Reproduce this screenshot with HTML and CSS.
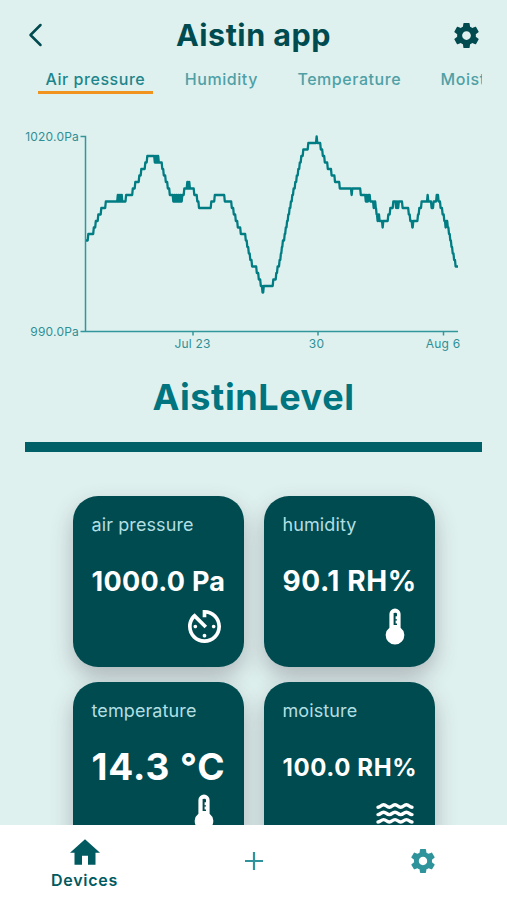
FILE: index.html
```
<!DOCTYPE html>
<html lang="en">
  <head>
    <meta charset="UTF-8" />
    <title>Aistin app</title>
    <link rel="stylesheet" href="styles.css" />
  </head>
  <body>
    <!-- shared icons -->
    <svg class="sprite">
      <symbol id="icon-gear" viewBox="2 2 20 20">
        <path d="M19.43 12.98c.04-.32.07-.64.07-.98s-.03-.66-.07-.98l2.11-1.65c.19-.15.24-.42.12-.64l-2-3.46c-.12-.22-.39-.3-.61-.22l-2.49 1c-.52-.4-1.08-.73-1.69-.98l-.38-2.65C14.46 2.18 14.25 2 14 2h-4c-.25 0-.46.18-.49.42l-.38 2.65c-.61.25-1.17.59-1.69.98l-2.49-1c-.23-.09-.49 0-.61.22l-2 3.46c-.13.22-.07.49.12.64l2.11 1.65c-.04.32-.07.65-.07.98s.03.66.07.98l-2.11 1.65c-.19.15-.24.42-.12.64l2 3.46c.12.22.39.3.61.22l2.49-1c.52.4 1.08.73 1.69.98l.38 2.65c.03.24.24.42.49.42h4c.25 0 .46-.18.49-.42l.38-2.65c.61-.25 1.17-.59 1.69-.98l2.49 1c.23.09.49 0 .61-.22l2-3.46c.12-.22.07-.49-.12-.64l-2.11-1.65zM12 15.5c-1.93 0-3.5-1.57-3.5-3.5s1.57-3.5 3.5-3.5 3.5 1.57 3.5 3.5-1.57 3.5-3.5 3.5z" />
      </symbol>
      <symbol id="icon-thermometer" viewBox="0 0 20 37">
        <path fill-rule="evenodd" d="M10 .5a5.6 5.6 0 0 1 5.6 5.6v13.6a9.3 9.3 0 1 1-11.2 0V6.1A5.6 5.6 0 0 1 10 .5zM8.6 5v12H12v-1.4h-1.4v-3H12v-1.4h-1.4v-3H12V6a1.200 1.200 0 0 0-1.200-1.200z" />
      </symbol>
    </svg>

    <div class="app">
      <header class="header">
        <svg class="back" viewBox="0 0 14 24">
          <path d="M12 2 2 12 12 22" />
        </svg>
        <h1>Aistin app</h1>
        <svg class="settings"><use href="#icon-gear" /></svg>
      </header>

      <nav class="tabs">
        <div class="tab active">Air pressure</div>
        <div class="tab">Humidity</div>
        <div class="tab">Temperature</div>
        <div class="tab">Moisture</div>
      </nav>

      <main class="content">
        <svg class="chart" viewBox="20 120 460 240">
          <path class="axis" d="M80.5 136.500H85.5V331.500H458M80.5 331.500H85.5M193 331.500v4M318 331.500v4M443.5 331.500v4" />
          <path class="line" id="line" />
          <g class="y-labels">
            <text x="79" y="140.5">1020.0Pa</text>
            <text x="79" y="336">990.0Pa</text>
          </g>
          <g class="x-labels">
            <text x="192.5" y="348">Jul 23</text>
            <text x="316.5" y="348">30</text>
            <text x="443" y="348">Aug 6</text>
          </g>
        </svg>

        <h2>AistinLevel</h2>
        <div class="divider"></div>

        <div class="cards">
          <div class="card">
            <div class="label">air pressure</div>
            <div class="value pressure">1000.0 Pa</div>
            <svg class="icon timer" viewBox="3 3 18 18">
              <path d="M11 17c0 .55.45 1 1 1s1-.45 1-1-.45-1-1-1-1 .45-1 1zm0-14v4h2V5.080c3.390.49 6 3.390 6 6.920 0 3.870-3.130 7-7 7s-7-3.130-7-7c0-1.680.59-3.220 1.580-4.420L12 13l1.410-1.410-6.800-6.800v.02C4.420 6.450 3 9.050 3 12c0 4.970 4.020 9 9 9 4.970 0 9-4.030 9-9s-4.030-9-9-9h-1zm7 9c0-.55-.45-1-1-1s-1 .45-1 1 .45 1 1 1 1-.45 1-1zM6 12c0 .55.45 1 1 1s1-.45 1-1-.45-1-1-1-1 .45-1 1z" />
            </svg>
          </div>
          <div class="card">
            <div class="label">humidity</div>
            <div class="value humidity">90.1 RH%</div>
            <svg class="icon thermometer"><use href="#icon-thermometer" /></svg>
          </div>
          <div class="card">
            <div class="label">temperature</div>
            <div class="value temperature">14.3 °C</div>
            <svg class="icon thermometer"><use href="#icon-thermometer" /></svg>
          </div>
          <div class="card">
            <div class="label">moisture</div>
            <div class="value moisture">100.0 RH%</div>
            <svg class="icon waves" viewBox="0 0 38 24">
              <path d="M2 6.200c2.800 0 2.800-2.400 5.600-2.400s2.900 2.400 5.700 2.400 2.900-2.400 5.700-2.400 2.900 2.400 5.700 2.400 2.900-2.400 5.700-2.400 2.800 2.400 5.600 2.400" />
              <path d="M2 13.600c2.800 0 2.800-2.400 5.600-2.400s2.900 2.400 5.700 2.400 2.900-2.400 5.700-2.400 2.900 2.400 5.700 2.400 2.900-2.400 5.700-2.400 2.800 2.400 5.600 2.400" />
              <path d="M2 21c2.800 0 2.800-2.400 5.600-2.400s2.900 2.400 5.700 2.400 2.900-2.400 5.700-2.400 2.900 2.400 5.700 2.400 2.900-2.400 5.700-2.400 2.800 2.400 5.600 2.400" />
            </svg>
          </div>
        </div>
      </main>

      <footer class="bottom-nav">
        <div class="nav-item active">
          <svg class="home" viewBox="2 3 20 17">
            <path d="M10 20v-6h4v6h5v-8h3L12 3 2 12h3v8z" />
          </svg>
          <span>Devices</span>
        </div>
        <div class="nav-item">
          <svg class="plus" viewBox="0 0 18 18">
            <path d="M9 0v18M0 9h18" />
          </svg>
        </div>
        <div class="nav-item">
          <svg class="gear"><use href="#icon-gear" /></svg>
        </div>
      </footer>
    </div>

    <script>
      // [x, pressure] - the reading changes to the given value at x
      const readings = [
        [86, 1004], [88, 1005], [93.5, 1006], [95.5, 1007], [98, 1008],
        [101, 1009], [105.5, 1010], [117.5, 1011], [118.5, 1010], [119.5, 1011],
        [120.5, 1010], [121.5, 1011], [122, 1010], [125.8, 1011], [132.5, 1012],
        [135, 1013], [139, 1014], [141, 1015], [145, 1016], [147, 1017],
        [154.5, 1016], [155.5, 1017], [156.5, 1016], [157.5, 1017], [158.5, 1016],
        [162, 1015], [163.5, 1014], [165.5, 1013], [167.5, 1012], [169.5, 1011],
        [173, 1010], [174, 1011], [175, 1010], [176, 1011], [177, 1010],
        [178, 1011], [179, 1010], [180, 1011], [181, 1010], [182, 1011],
        [184, 1012], [187, 1013], [188, 1012], [188.8, 1013], [189.6, 1012],
        [194, 1011], [197, 1010], [198.7, 1009], [211, 1010], [214.5, 1011],
        [224.5, 1010], [231.5, 1009], [233.5, 1008], [235.5, 1007], [237.5, 1006],
        [240.5, 1005], [245.5, 1004], [247, 1003], [248.5, 1002], [250, 1001],
        [251.8, 1000], [256.5, 999], [258.5, 998], [260.5, 997], [262.2, 996],
        [263.5, 997], [273, 998], [276, 999], [277.3, 1000], [279.3, 1001],
        [280.6, 1002], [281.6, 1003], [282.6, 1004], [284.4, 1005], [285.5, 1006],
        [286.8, 1007], [288, 1008], [289.3, 1009], [290.6, 1010], [292, 1011],
        [293.3, 1012], [295, 1013], [296.5, 1014], [298, 1015], [299.5, 1016],
        [301, 1017], [303, 1018], [308, 1019], [316.3, 1020], [317, 1019],
        [320.5, 1018], [322.5, 1017], [324.5, 1016], [327.5, 1015], [331.3, 1014],
        [334.7, 1013], [339.5, 1012], [351.3, 1011], [352, 1012], [360.5, 1011],
        [365.5, 1010], [366.5, 1011], [367.2, 1010], [368.3, 1011], [370, 1010],
        [373.4, 1009], [374.4, 1010], [375.5, 1009], [376.3, 1008], [377.3, 1007],
        [378.3, 1008], [379.3, 1007], [382.3, 1006], [383, 1007], [388, 1008],
        [390, 1009], [393, 1010], [395.8, 1009], [396.5, 1010], [397.5, 1009],
        [398.5, 1010], [402.3, 1009], [408.5, 1008], [410, 1007], [412, 1006],
        [413, 1007], [417.7, 1008], [419, 1009], [421.3, 1010], [427.3, 1011],
        [428, 1010], [431.3, 1009], [433.3, 1010], [436.4, 1011], [438.3, 1010],
        [440.3, 1009], [442.3, 1008], [444, 1007], [445.3, 1006], [446, 1007],
        [447.5, 1006], [448.7, 1005], [450, 1004], [451.2, 1003], [452.4, 1002],
        [453.8, 1001], [455.3, 1000],
      ];

      const toY = (value) => 136.5 + (1020 - value) * 6.5;
      let lastY = toY(readings[0][1]);
      let path = `M${readings[0][0]} ${lastY}`;
      readings.slice(1).forEach(([x, value]) => {
        // lean each step a little so it is not a hard corner
        path += `L${x - 0.3} ${lastY}`;
        lastY = toY(value);
        path += `L${x + 0.3} ${lastY}`;
      });
      document.getElementById("line").setAttribute("d", path + "H458");
    </script>
  </body>
</html>
```

FILE: styles.css
```
* {
  box-sizing: border-box;
}

body {
  margin: 0;
  font-family: Inter, "Liberation Sans", sans-serif;
  background: #dff1ef;
}

h1,
h2 {
  margin: 0;
}

.sprite {
  display: none;
}

.app {
  display: flex;
  flex-direction: column;
  height: 900px;
  overflow: hidden;
}

.header {
  display: flex;
  flex-shrink: 0;
  align-items: center;
  justify-content: space-between;
  height: 70px;
  padding: 0 28px 0 23px;
  color: #004b50;
}

.header h1 {
  margin-bottom: 1px;
  font-size: 30.5px;
  font-weight: 700;
  letter-spacing: 0.5px;
}

.back {
  width: 25px;
  height: 24px;
  margin-right: 5px;
  fill: none;
  stroke: #004b50;
  stroke-width: 2.5;
  stroke-linecap: round;
  stroke-linejoin: round;
}

.settings {
  width: 25px;
  height: 25px;
  fill: #004b50;
}

.tabs {
  display: flex;
  flex-shrink: 0;
  gap: 24.5px;
  height: 24px;
  margin: 0 25px;
  padding-left: 13px;
  overflow: hidden;
}

.tab {
  flex-shrink: 0;
  height: 24px;
  padding: 0 7.5px;
  color: #4fa0a5;
  font-size: 16px;
  font-weight: 500;
  line-height: 18px;
  letter-spacing: 0.55px;
}

.tab.active {
  color: #1d858b;
  border-bottom: 3px solid #f0941f;
}

.content {
  flex: 1;
  min-height: 0;
  overflow: hidden;
}

.chart {
  display: block;
  width: 460px;
  height: 240px;
  margin: 26px 0 0 20px;
}

.axis {
  fill: none;
  stroke: #32969b;
  stroke-width: 1.5;
}

.line {
  fill: none;
  stroke: #007c83;
  stroke-width: 2.3;
  stroke-linejoin: round;
}

.chart text {
  fill: #2f8f95;
  font-size: 12px;
  letter-spacing: 0.2px;
}

.y-labels {
  text-anchor: end;
}

.x-labels {
  text-anchor: middle;
}

.content h2 {
  margin-top: 15px;
  color: #00757f;
  font-size: 36px;
  font-weight: 700;
  line-height: 44px;
  letter-spacing: 0.6px;
  text-align: center;
}

.divider {
  height: 10px;
  margin: 23px 25px 0;
  background: #006068;
}

.cards {
  display: grid;
  grid-template-columns: 171px 171px;
  gap: 15px 20px;
  justify-content: center;
  margin-top: 43.5px;
}

.card {
  display: flex;
  flex-direction: column;
  height: 171px;
  padding: 18px 0 0 19px;
  border-radius: 25px;
  background: #004b50;
  box-shadow: 0 10px 22px rgba(70, 60, 75, 0.32);
}

.label {
  color: #b2dfe2;
  font-size: 18px;
  line-height: 22px;
  letter-spacing: 0.1px;
}

.value {
  height: 40px;
  margin-top: 26px;
  color: #fff;
  font-weight: 700;
  line-height: 40px;
  white-space: nowrap;
}

.pressure {
  font-size: 27px;
  letter-spacing: 0.3px;
}

.humidity {
  font-size: 28px;
  line-height: 38px;
  letter-spacing: 0.6px;
}

.temperature {
  font-size: 37px;
  line-height: 38px;
  letter-spacing: 0.9px;
}

.moisture {
  font-size: 24px;
  letter-spacing: 0.6px;
}

.icon {
  align-self: flex-end;
  fill: #fff;
}

.timer {
  width: 33px;
  height: 33px;
  margin: 8px 23px 0 0;
}

.thermometer {
  width: 20px;
  height: 37px;
  margin: 6px 30px 0 0;
}

.waves {
  width: 38px;
  height: 24px;
  margin: 13px 21px 0 0;
  fill: none;
  stroke: #fff;
  stroke-width: 3.4;
  stroke-linecap: round;
}

.bottom-nav {
  z-index: 1;
  display: flex;
  flex-shrink: 0;
  height: 75px;
  background: #fff;
}

.nav-item {
  display: flex;
  flex: 1;
  flex-direction: column;
  align-items: center;
  padding-top: 24px;
}

.nav-item.active {
  padding-top: 14px;
  color: #005a60;
  font-size: 16px;
  font-weight: 600;
  letter-spacing: 0.7px;
}

.home {
  width: 30px;
  height: 26px;
  margin-bottom: 5px;
  fill: #005a60;
}

.plus {
  width: 18px;
  height: 18px;
  margin-top: 3px;
  stroke: #2f939b;
  stroke-width: 2.2;
}

.gear {
  width: 24px;
  height: 24px;
  fill: #2f939b;
}
```
